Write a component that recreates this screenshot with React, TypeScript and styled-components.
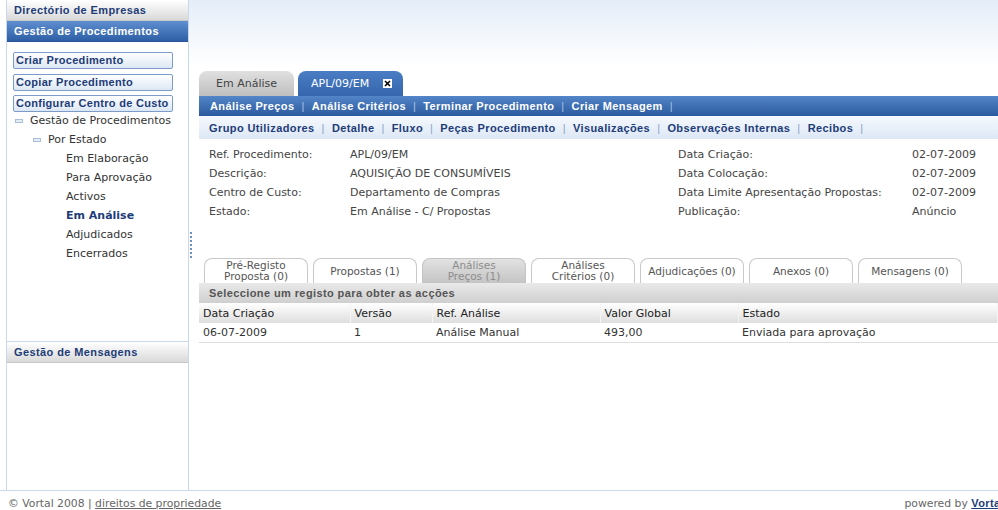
import styled, { createGlobalStyle } from "styled-components";

const GlobalStyle = createGlobalStyle`
  html, body {
    margin: 0;
    padding: 0;
    background: #ffffff;
  }
  body {
    font-family: "DejaVu Sans", Verdana, sans-serif;
    font-size: 11px;
    color: #333333;
  }
`;

const BOLD = `"Liberation Sans", Arial, sans-serif`;
const TOP_FADE = "linear-gradient(#e4edf8 0px, #ffffff 66px) no-repeat";

export const Page = styled.div`
  width: 998px;
  height: 510px;
  overflow: hidden;
  display: flex;
  flex-direction: column;
`;

export const Frame = styled.div`
  height: 491px;
  display: flex;
  border-bottom: 1px solid #c9d8ea;
`;

export const Sidebar = styled.div`
  width: 181px;
  margin-left: 6px;
  border-left: 1px solid #c9d8ea;
  border-right: 1px solid #c9d8ea;
  display: flex;
  flex-direction: column;
`;

export const SectionHeader = styled.div<{ $active?: boolean }>`
  height: 20px;
  line-height: 20px;
  padding-left: 7px;
  font-family: ${BOLD};
  font-weight: bold;
  font-size: 11px;
  letter-spacing: 0.4px;
  color: ${(p) => (p.$active ? "#ffffff" : "#1d3c78")};
  background: ${(p) =>
    p.$active
      ? "linear-gradient(#5f8fd0, #2d5fa6)"
      : "linear-gradient(#ffffff, #d9d9d9)"};
  border-bottom: 1px solid ${(p) => (p.$active ? "#2a5599" : "#c8c8c8")};
`;

export const ProcPanel = styled.div`
  height: 299px;
  border-bottom: 1px solid #c9d8ea;
`;

export const ActionList = styled.div`
  display: flex;
  flex-direction: column;
  gap: 4.5px;
  padding: 10px 0 0 6px;
`;

export const ActionButton = styled.div`
  width: 156px;
  height: 15px;
  line-height: 15px;
  padding-left: 2px;
  border: 1px solid #7d9bc9;
  border-radius: 2px;
  background: linear-gradient(#ffffff, #dce7f4);
  font-family: ${BOLD};
  font-weight: bold;
  font-size: 11px;
  letter-spacing: 0.3px;
  color: #1d3c78;
  white-space: nowrap;
`;

export const Tree = styled.ul`
  list-style: none;
  margin: -1px 0 0;
  padding: 0;
`;

export const TreeItem = styled.li<{ $level: number; $bold?: boolean }>`
  height: 19px;
  line-height: 19px;
  padding-left: ${(p) => [8, 26, 59][p.$level]}px;
  display: flex;
  align-items: center;
  gap: 7px;
  color: ${(p) => (p.$bold ? "#1d3c78" : "#333333")};
  font-weight: ${(p) => (p.$bold ? "bold" : "normal")};
`;

export const Minus = styled.span`
  width: 8px;
  height: 4px;
  border: 1px solid #a9bfdc;
  background: #e4ecf6;
  box-sizing: border-box;
`;

export const Splitter = styled.div`
  width: 3px;
  display: flex;
  flex-direction: column;
  justify-content: center;
  background: ${TOP_FADE};
`;

export const Dots = styled.div`
  height: 26px;
  margin-left: 1px;
  border-left: 2px dotted #6d8fc4;
`;

export const Main = styled.div`
  flex: 1;
  min-width: 0;
  display: flex;
  flex-direction: column;
  background: ${TOP_FADE};
`;

export const TopTabs = styled.div`
  display: flex;
  gap: 4px;
  padding: 71px 0 0 7px;
`;

export const TopTab = styled.div<{ $active?: boolean; $w: number }>`
  width: ${(p) => p.$w}px;
  height: 25px;
  box-sizing: border-box;
  padding-left: ${(p) => (p.$active ? 13 : 17)}px;
  border-radius: 8px 8px 0 0;
  display: flex;
  align-items: center;
  gap: 14px;
  color: ${(p) => (p.$active ? "#ffffff" : "#444444")};
  background: ${(p) =>
    p.$active
      ? "linear-gradient(#4a7dc4, #3566ae)"
      : "linear-gradient(#e0e0e0, #bfbfbf)"};
`;

export const CloseBox = styled.span`
  width: 9px;
  height: 9px;
  background: #ffffff;
  display: flex;
  align-items: center;
  justify-content: center;
`;

export const MenuBar = styled.div<{ $dark?: boolean }>`
  margin-left: 7px;
  height: ${(p) => (p.$dark ? 20 : 23)}px;
  display: flex;
  align-items: center;
  padding-left: ${(p) => (p.$dark ? 11 : 10)}px;
  font-family: ${BOLD};
  font-weight: bold;
  font-size: 11px;
  letter-spacing: 0.4px;
  white-space: nowrap;
  color: ${(p) => (p.$dark ? "#ffffff" : "#1d3c78")};
  background: ${(p) =>
    p.$dark
      ? "linear-gradient(#5385c9, #2c5a9e)"
      : "linear-gradient(#f6f9fd, #dce7f5)"};
`;

export const Sep = styled.span<{ $dark?: boolean }>`
  font-weight: normal;
  margin: 0 7px;
  color: ${(p) => (p.$dark ? "#a8c2e6" : "#8aa4c8")};
`;

export const InfoGrid = styled.div`
  display: grid;
  grid-template-columns: 141px 328px 234px auto;
  grid-auto-rows: 19px;
  line-height: 19px;
  padding: 6px 0 0 17px;
  color: #444444;
`;

export const DetailTabs = styled.div`
  display: flex;
  gap: 5px;
  padding: 37px 0 0 12px;
`;

export const DetailTab = styled.div<{ $active?: boolean }>`
  width: 104px;
  height: 25px;
  box-sizing: border-box;
  border: 1px solid ${(p) => (p.$active ? "#c4c4c4" : "#c9c9c9")};
  border-bottom: none;
  border-radius: 8px 8px 0 0;
  display: flex;
  align-items: center;
  justify-content: center;
  text-align: center;
  font-size: 10.5px;
  line-height: 11px;
  white-space: nowrap;
  color: ${(p) => (p.$active ? "#8c8c8c" : "#555555")};
  background: ${(p) =>
    p.$active ? "linear-gradient(#e2e2e2, #c4c4c4)" : "#ffffff"};
`;

export const GrayBar = styled.div`
  margin-left: 7px;
  height: 20px;
  line-height: 20px;
  padding-left: 10px;
  font-family: ${BOLD};
  font-weight: bold;
  font-size: 11px;
  letter-spacing: 0.4px;
  color: #555555;
  background: linear-gradient(#e9e9e9, #cfcfcf);
`;

export const Table = styled.table`
  margin-left: 7px;
  border-collapse: collapse;
  width: calc(100% - 7px);
  table-layout: fixed;
`;

export const Th = styled.th<{ $w?: number }>`
  ${(p) => p.$w && `width: ${p.$w}px;`}
  box-sizing: border-box;
  height: 20px;
  padding: 0 4px;
  text-align: left;
  font-weight: normal;
  color: #222222;
  background: linear-gradient(#ffffff, #dedede);
  border-right: 1px solid #f4f4f4;
`;

export const Td = styled.td`
  height: 19px;
  padding: 0 4px;
  color: #333333;
  border-bottom: 1px solid #dddddd;
`;

export const Footer = styled.div`
  flex: 1;
  display: flex;
  align-items: center;
  justify-content: space-between;
  padding: 6px 0 0 8px;
  margin-right: -6px;
  font-size: 10.8px;
  color: #666666;
`;

export const FooterLink = styled.span<{ $strong?: boolean }>`
  text-decoration: underline;
  ${(p) =>
    p.$strong &&
    `font-weight: bold; color: #1d3c78; font-family: ${BOLD}; font-size: 11px; letter-spacing: 0.4px;`}
`;

const actions = ["Criar Procedimento", "Copiar Procedimento", "Configurar Centro de Custo"];
const states = ["Em Elaboração", "Para Aprovação", "Activos", "Em Análise", "Adjudicados", "Encerrados"];
const menu1 = ["Análise Preços", "Análise Critérios", "Terminar Procedimento", "Criar Mensagem"];
const menu2 = [
  "Grupo Utilizadores",
  "Detalhe",
  "Fluxo",
  "Peças Procedimento",
  "Visualizações",
  "Observações Internas",
  "Recibos",
];
const info = [
  ["Ref. Procedimento:", "APL/09/EM", "Data Criação:", "02-07-2009"],
  ["Descrição:", "AQUISIÇÃO DE CONSUMÍVEIS", "Data Colocação:", "02-07-2009"],
  ["Centro de Custo:", "Departamento de Compras", "Data Limite Apresentação Propostas:", "02-07-2009"],
  ["Estado:", "Em Análise - C/ Propostas", "Publicação:", "Anúncio"],
];
const detailTabs = [
  ["Pré-Registo", "Proposta (0)"],
  ["Propostas (1)"],
  ["Análises", "Preços (1)"],
  ["Análises", "Critérios (0)"],
  ["Adjudicações (0)"],
  ["Anexos (0)"],
  ["Mensagens (0)"],
];

export default function App() {
  return (
    <Page>
      <GlobalStyle />
      <Frame>
        <Sidebar>
          <SectionHeader>Directório de Empresas</SectionHeader>
          <SectionHeader $active>Gestão de Procedimentos</SectionHeader>
          <ProcPanel>
            <ActionList>
              {actions.map((a) => (
                <ActionButton key={a}>{a}</ActionButton>
              ))}
            </ActionList>
            <Tree>
              <TreeItem $level={0}>
                <Minus />
                Gestão de Procedimentos
              </TreeItem>
              <TreeItem $level={1}>
                <Minus />
                Por Estado
              </TreeItem>
              {states.map((s) => (
                <TreeItem key={s} $level={2} $bold={s === "Em Análise"}>
                  {s}
                </TreeItem>
              ))}
            </Tree>
          </ProcPanel>
          <SectionHeader>Gestão de Mensagens</SectionHeader>
        </Sidebar>
        <Splitter>
          <Dots />
        </Splitter>
        <Main>
          <TopTabs>
            <TopTab $w={95}>Em Análise</TopTab>
            <TopTab $w={105} $active>
              APL/09/EM
              <CloseBox>
                <svg width="7" height="7" viewBox="0 0 7 7">
                  <path d="M1 1L6 6M6 1L1 6" stroke="#000" strokeWidth="1.6" />
                </svg>
              </CloseBox>
            </TopTab>
          </TopTabs>
          <MenuBar $dark>
            {menu1.map((m) => (
              <span key={m}>
                {m}
                <Sep $dark>|</Sep>
              </span>
            ))}
          </MenuBar>
          <MenuBar>
            {menu2.map((m) => (
              <span key={m}>
                {m}
                <Sep>|</Sep>
              </span>
            ))}
          </MenuBar>
          <InfoGrid>
            {info.flat().map((t, i) => (
              <span key={i}>{t}</span>
            ))}
          </InfoGrid>
          <DetailTabs>
            {detailTabs.map((t, i) => (
              <DetailTab key={i} $active={i === 2}>
                <div>
                  {t.map((l) => (
                    <div key={l}>{l}</div>
                  ))}
                </div>
              </DetailTab>
            ))}
          </DetailTabs>
          <GrayBar>Seleccione um registo para obter as acções</GrayBar>
          <Table>
            <thead>
              <tr>
                <Th $w={151}>Data Criação</Th>
                <Th $w={82}>Versão</Th>
                <Th $w={168}>Ref. Análise</Th>
                <Th $w={138}>Valor Global</Th>
                <Th>Estado</Th>
              </tr>
            </thead>
            <tbody>
              <tr>
                <Td>06-07-2009</Td>
                <Td>1</Td>
                <Td>Análise Manual</Td>
                <Td>493,00</Td>
                <Td>Enviada para aprovação</Td>
              </tr>
            </tbody>
          </Table>
        </Main>
      </Frame>
      <Footer>
        <span>
          © Vortal 2008 | <FooterLink>direitos de propriedade</FooterLink>
        </span>
        <span>
          powered by <FooterLink $strong>Vortal</FooterLink>
        </span>
      </Footer>
    </Page>
  );
}
